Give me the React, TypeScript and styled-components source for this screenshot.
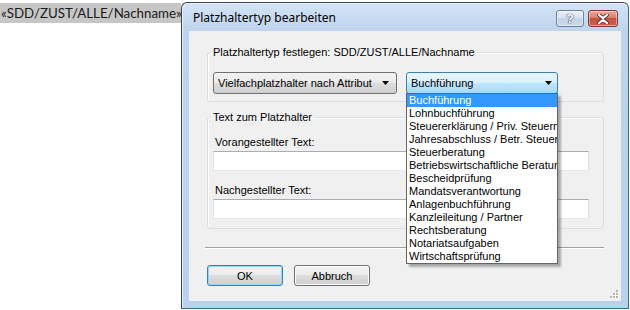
import styled, { createGlobalStyle } from "styled-components";

const GlobalStyle = createGlobalStyle`
  html, body {
    margin: 0;
    padding: 0;
    background: #ffffff;
  }
  body {
    width: 630px;
    height: 310px;
    overflow: hidden;
    font-family: "Liberation Sans", Arial, sans-serif;
  }
`;

const Page = styled.div`
  display: flex;
  align-items: flex-start;
`;

const MergeField = styled.span`
  width: 181px;
  height: 20px;
  margin-top: 3px;
  padding-left: 1px;
  box-sizing: border-box;
  background: #c6c6c6;
  font-family: Lato, "Liberation Sans", sans-serif;
  font-size: 13.3px;
  line-height: 20px;
  color: #1a1a1a;
  white-space: nowrap;
`;

const Window = styled.div`
  margin-top: 2px;
  width: 448px;
  height: 307px;
  box-sizing: border-box;
  border: 1px solid #37434e;
  border-right-color: #2f6f8f;
  border-bottom-color: #2f6f8f;
  border-radius: 6px 6px 0 0;
  background: linear-gradient(#d3e3f5, #bed4ed 28px, #b9d1ea);
  box-shadow: inset 1px 1px 0 rgba(255, 255, 255, 0.6);
  padding: 0 7px 7px 7px;
  display: flex;
  flex-direction: column;
`;

const TitleBar = styled.div`
  height: 28px;
  display: flex;
  align-items: center;
`;

const Title = styled.span`
  flex: 1;
  padding-left: 4px;
  font-family: "Noto Sans", "Open Sans", sans-serif;
  font-size: 12px;
  line-height: 16px;
  margin-top: 2px;
  color: #000;
`;

const CaptionButtons = styled.div`
  align-self: flex-start;
  margin-top: 7px;
  margin-right: 3px;
  display: flex;
  gap: 4px;
`;

const CaptionButton = styled.div<{ $close?: boolean }>`
  width: ${(p) => (p.$close ? 30 : 28)}px;
  height: 17px;
  box-sizing: border-box;
  border: 1px solid ${(p) => (p.$close ? "#7c3a30" : "#6b7f9c")};
  border-radius: 3px;
  background: ${(p) =>
    p.$close
      ? "linear-gradient(#e9a99b, #d7816f 45%, #c4513f 50%, #c9604c 100%)"
      : "linear-gradient(#edf2f9, #d7e2f0 45%, #c3d2e6 50%, #cbd9ec 100%)"};
  box-shadow: inset 0 0 0 1px rgba(255, 255, 255, 0.45);
  display: flex;
  align-items: center;
  justify-content: center;
  font-family: "Liberation Sans", sans-serif;
  font-weight: bold;
  font-size: 13px;
  color: #ffffff;
  text-shadow: 0 0 1px #3d4c60, 0 0 1px #3d4c60, 0 0 1px #3d4c60;
`;

const Client = styled.div`
  flex: 1;
  position: relative;
  background: #f0f0f0;
  padding: 14px 17px 0 18px;
  display: flex;
  flex-direction: column;
  font-size: 11px;
  color: #000;
`;

const Group = styled.fieldset<{ $gap?: number; $padTop: number; $padBottom: number }>`
  margin: ${(p) => p.$gap ?? 0}px 0 0 0;
  padding: ${(p) => p.$padTop}px 14px ${(p) => p.$padBottom}px 5px;
  border: 1px solid #d5dfe5;
  border-radius: 3px;
  box-shadow: inset 1px 1px 0 #fff;
  min-width: 0;
`;

const Legend = styled.legend`
  padding: 0 2px;
  margin-left: -2px;
  font-size: 11px;
  line-height: 14px;
`;

const ComboRow = styled.div`
  display: flex;
  gap: 9px;
`;

const ComboWrap = styled.div`
  position: relative;
`;

const Combo = styled.div<{ $width: number; $open?: boolean }>`
  width: ${(p) => p.$width}px;
  height: 22px;
  box-sizing: border-box;
  border: 1px solid ${(p) => (p.$open ? "#3c7fb1" : "#707070")};
  border-radius: 3px;
  background: ${(p) =>
    p.$open
      ? "linear-gradient(#eaf6fd, #d9f0fc 50%, #bee6fd 50%, #a7d9f5)"
      : "linear-gradient(#f2f2f2, #ebebeb 50%, #dddddd 50%, #cfcfcf)"};
  display: flex;
  align-items: center;
  padding: 0 ${(p) => (p.$open ? 5 : 7)}px 0 4px;
  font-size: 11px;
  white-space: nowrap;
`;

const ComboText = styled.span`
  flex: 1;
  overflow: hidden;
`;

const DropList = styled.div`
  position: absolute;
  top: 21px;
  left: 0;
  width: 152px;
  box-sizing: border-box;
  background: #ffffff;
  border: 1px solid #646464;
  box-shadow: 3px 3px 2px rgba(0, 0, 0, 0.3);
  z-index: 5;
`;

const DropItem = styled.div<{ $selected?: boolean }>`
  height: 13px;
  line-height: 13px;
  padding-left: 2px;
  font-size: 11px;
  white-space: nowrap;
  overflow: hidden;
  background: ${(p) => (p.$selected ? "#3399ff" : "transparent")};
  color: ${(p) => (p.$selected ? "#ffffff" : "#000000")};
`;

const FieldLabel = styled.div<{ $gap: number }>`
  margin-top: ${(p) => p.$gap}px;
  padding-left: 2px;
  line-height: 14px;
  font-size: 11px;
`;

const TextInput = styled.div`
  margin-top: 2px;
  width: 376px;
  height: 20px;
  box-sizing: border-box;
  background: #ffffff;
  border: 1px solid;
  border-color: #abadb3 #dbdfe6 #e3e9ef #e2e3ea;
`;

const Separator = styled.div`
  margin: 18px 0 0 -2px;
  width: 399px;
  border-top: 1px solid #a0a0a0;
  border-bottom: 1px solid #ffffff;
`;

const ButtonRow = styled.div`
  margin-top: 16px;
  display: flex;
  gap: 11px;
`;

const PushButton = styled.div<{ $default?: boolean }>`
  width: 76px;
  height: 21px;
  box-sizing: border-box;
  border: 1px solid ${(p) => (p.$default ? "#3c7fb1" : "#707070")};
  border-radius: 3px;
  background: linear-gradient(#f2f2f2, #ebebeb 50%, #dddddd 50%, #cfcfcf);
  box-shadow: ${(p) => (p.$default ? "inset 0 0 0 1px #8fd9fb" : "inset 0 0 0 1px #fcfcfc")};
  display: flex;
  align-items: center;
  justify-content: center;
  font-size: 11px;
`;

const Grip = styled.svg`
  position: absolute;
  right: 2px;
  bottom: 2px;
`;

const Arrow = () => (
  <svg width="7" height="4" viewBox="0 0 7 4">
    <path d="M0 0h7L3.5 4z" fill="#000" />
  </svg>
);

const items = [
  "Buchführung",
  "Lohnbuchführung",
  "Steuererklärung / Priv. Steuern",
  "Jahresabschluss / Betr. Steuern",
  "Steuerberatung",
  "Betriebswirtschaftliche Beratung",
  "Bescheidprüfung",
  "Mandatsverantwortung",
  "Anlagenbuchführung",
  "Kanzleileitung / Partner",
  "Rechtsberatung",
  "Notariatsaufgaben",
  "Wirtschaftsprüfung",
];

export default function App() {
  return (
    <Page>
      <GlobalStyle />
      <MergeField>«SDD/ZUST/ALLE/Nachname»</MergeField>
      <Window>
        <TitleBar>
          <Title>Platzhaltertyp bearbeiten</Title>
          <CaptionButtons>
            <CaptionButton>?</CaptionButton>
            <CaptionButton $close>
              <svg width="12" height="10" viewBox="0 0 12 10">
                <path
                  d="M2 1l4 3.2L10 1M2 9l4-3.2L10 9"
                  stroke="#4a2520"
                  strokeWidth="3.6"
                  fill="none"
                  strokeLinecap="round"
                />
                <path
                  d="M2 1l4 3.2L10 1M2 9l4-3.2L10 9"
                  stroke="#ffffff"
                  strokeWidth="2.2"
                  fill="none"
                  strokeLinecap="round"
                />
              </svg>
            </CaptionButton>
          </CaptionButtons>
        </TitleBar>
        <Client>
          <Group $padTop={13} $padBottom={7}>
            <Legend>Platzhaltertyp festlegen: SDD/ZUST/ALLE/Nachname</Legend>
            <ComboRow>
              <Combo $width={184}>
                <ComboText>Vielfachplatzhalter nach Attribut</ComboText>
                <Arrow />
              </Combo>
              <ComboWrap>
                <Combo $width={152} $open>
                  <ComboText>Buchführung</ComboText>
                  <Arrow />
                </Combo>
                <DropList>
                  {items.map((it, i) => (
                    <DropItem key={it} $selected={i === 0}>
                      {it}
                    </DropItem>
                  ))}
                </DropList>
              </ComboWrap>
            </ComboRow>
          </Group>
          <Group $gap={8} $padTop={11} $padBottom={9}>
            <Legend>Text zum Platzhalter</Legend>
            <FieldLabel $gap={0}>Vorangestellter Text:</FieldLabel>
            <TextInput />
            <FieldLabel $gap={12}>Nachgestellter Text:</FieldLabel>
            <TextInput />
          </Group>
          <Separator />
          <ButtonRow>
            <PushButton $default>OK</PushButton>
            <PushButton>Abbruch</PushButton>
          </ButtonRow>
          <Grip width="10" height="10" viewBox="0 0 10 10">
            {[
              [7, 1],
              [4, 4],
              [7, 4],
              [1, 7],
              [4, 7],
              [7, 7],
            ].map(([x, y]) => (
              <g key={`${x}-${y}`}>
                <rect x={x + 1} y={y + 1} width="2" height="2" fill="#ffffff" />
                <rect x={x} y={y} width="2" height="2" fill="#b4b4b4" />
              </g>
            ))}
          </Grip>
        </Client>
      </Window>
    </Page>
  );
}
